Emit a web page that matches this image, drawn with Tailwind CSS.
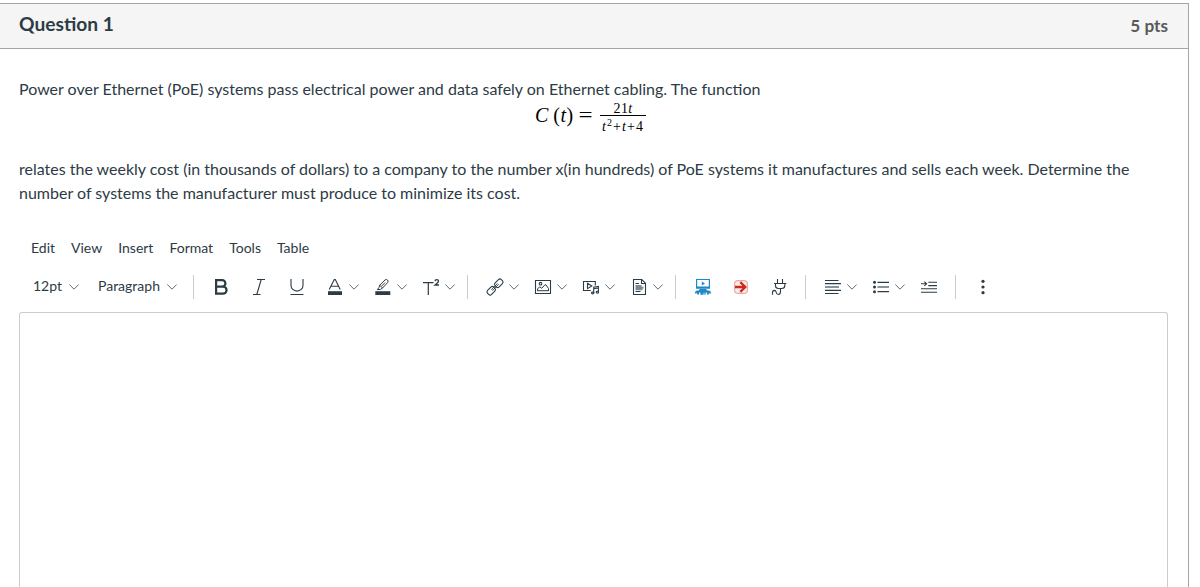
<!DOCTYPE html>
<html lang="en">
<head>
  <meta charset="UTF-8" />
  <title>Question 1</title>
  <meta name="viewport" content="width=device-width, initial-scale=1" />
  <!-- Tailwind CSS -->
  <script src="https://cdn.jsdelivr.net/npm/@tailwindcss/browser@4"></script>
</head>
<body class="bg-white h-screen overflow-hidden pt-[3px] font-['Lato','Noto_Sans',sans-serif] text-[#2d3b45]">
  <!-- Shared chevron -->
  <svg class="hidden">
    <symbol id="chevron" viewBox="0 0 10 6">
      <path d="M.3.5 5 5.2 9.7.5" fill="none" stroke="#5f6a73" stroke-width="1" />
    </symbol>
  </svg>

  <div class="w-[1189px] h-full border-t border-r border-[#a5a5a5] flex flex-col">
    <!-- Question Header -->
    <div class="h-[45px] shrink-0 bg-[#f5f5f5] border-b border-[#a5a5a5] pl-[19px] pr-5 flex items-center justify-between">
      <h2 class="text-[19.2px] leading-7 font-bold pb-[5px]">Question 1</h2>
      <span class="text-[17.2px] leading-6 font-bold text-[#595959] pb-px">5 pts</span>
    </div>

    <!-- Question Text -->
    <div class="px-[19px] pt-7 text-base leading-6 shrink-0">
      <p>Power over Ethernet (PoE) systems pass electrical power and data safely on Ethernet cabling. The function</p>
      <div class="h-14 flex justify-center font-['Liberation_Serif',serif] text-black pr-[7px]">
        <div class="h-[27px] flex items-center">
          <span class="text-[20px] leading-none whitespace-nowrap"><i>C</i><span class="ml-[5px] tracking-[0.5px]">(<i>t</i>)</span><span class="ml-1.5 inline-block scale-x-125">=</span></span>
          <span class="ml-[9px] w-[46px] flex flex-col items-center text-[14px] leading-none pt-1">
            <span class="h-[13px] tracking-[0.3px]">21<i>t</i></span>
            <span class="w-full h-px bg-black"></span>
            <span class="h-[15px] pt-1 whitespace-nowrap tracking-[1.1px]"><i>t</i><sup class="text-[10px] leading-none">2</sup>+<i>t</i>+4</span>
          </span>
        </div>
      </div>
      <p>relates the weekly cost (in thousands of dollars) to a company to the number x(in hundreds) of PoE systems it manufactures and sells each week. Determine the number of systems the manufacturer must produce to minimize its cost.</p>
    </div>

    <!-- Menu Bar -->
    <div class="mt-[31px] ml-[31px] h-6 shrink-0 flex items-center gap-4 text-sm">
      <span>Edit</span>
      <span>View</span>
      <span>Insert</span>
      <span>Format</span>
      <span>Tools</span>
      <span>Table</span>
    </div>

    <!-- Toolbar -->
    <div class="mt-[15px] ml-[33px] h-6 shrink-0 flex items-center text-sm">
      <div class="w-[65px] flex items-center">
        <span class="w-9 pb-0.5">12pt</span>
        <svg class="w-2.5 h-1.5"><use href="#chevron" /></svg>
      </div>
      <div class="w-[95px] flex items-center">
        <span class="w-[69px] pb-0.5">Paragraph</span>
        <svg class="w-2.5 h-1.5"><use href="#chevron" /></svg>
      </div>

      <div class="h-6 border-l border-[#c7cdd1] pl-2 pr-[7px] flex items-center">
        <button class="w-[38px] flex justify-center">
          <svg class="w-5 h-5" viewBox="0 0 20 20" fill="none" stroke="#2d3b45" stroke-width="2.2"><path d="M5.1 3v14M4 3.2h7.2a3.2 3.2 0 0 1 0 6.4H5.1M4 16.7h8a3.5 3.5 0 0 0 0-7.1h-1" /></svg>
        </button>
        <button class="w-[38px] flex justify-center">
          <svg class="w-5 h-5" viewBox="0 0 20 20" fill="none" stroke="#2d3b45" stroke-width="1.1"><path d="M8 2.5h8M4 17.5h7.5M12.2 2.5 7.8 17.5" /></svg>
        </button>
        <button class="w-[38px] flex justify-center">
          <svg class="w-5 h-5" viewBox="0 0 20 20" fill="none" stroke="#2d3b45" stroke-width="1.1"><path d="M4 2v6.5a6 5.6 0 0 0 12 0V2M3.5 17.5h13" /></svg>
        </button>
        <button class="w-12 flex items-center pl-[9px] gap-1">
          <svg class="w-5 h-5 shrink-0" viewBox="0 0 20 20" fill="none" stroke="#2d3b45" stroke-width="1.1"><path d="M4.2 12.5 9.3 2.6h1L15.2 12.5M6 9.3h7.6" /><path d="M3 14.2h14V18H3z" fill="#2d3b45" stroke="none" /></svg>
          <svg class="w-2.5 h-1.5 shrink-0"><use href="#chevron" /></svg>
        </button>
        <button class="w-12 flex items-center pl-[9px] gap-1">
          <svg class="w-5 h-5 shrink-0" viewBox="0 0 20 20" fill="none" stroke="#2d3b45" stroke-width="1"><path d="M6.6 8.2 12.2 2.8q1.2-.8 2.3.2t.3 2.3L9.6 11M6.6 8.2l-.5 2.2-1.8 2.2 3.2-.2L9.6 11M6.6 8.2 9.6 11M8.7 9 12 5.6" /><path d="M2.3 14.2h15V18h-15z" fill="#2d3b45" stroke="none" /></svg>
          <svg class="w-2.5 h-1.5 shrink-0"><use href="#chevron" /></svg>
        </button>
        <button class="w-12 flex items-center pl-[9px] gap-1">
          <svg class="w-5 h-5 shrink-0" viewBox="0 0 20 20" fill="none" stroke="#2d3b45" stroke-width="1.2"><path d="M2 5.6h10.5M7.3 5.6V18" /><path d="M14 4.2q.1-1.5 1.8-1.5 1.7 0 1.7 1.4 0 .9-1.2 1.8L14 8h4" stroke-width="1.3" /></svg>
          <svg class="w-2.5 h-1.5 shrink-0"><use href="#chevron" /></svg>
        </button>
      </div>

      <div class="h-6 border-l border-[#c7cdd1] pl-2 pr-[7px] flex items-center">
        <button class="w-12 flex items-center pl-[9px] gap-1">
          <svg class="w-5 h-5 shrink-0" viewBox="0 0 20 20" fill="none" stroke="#2d3b45" stroke-width="1.1"><g transform="rotate(-45 10 10)"><rect x=".3" y="7.2" width="8.7" height="5.6" rx="2" /><rect x="11" y="7.2" width="8.7" height="5.6" rx="2" /><path d="M6 9.3h8v1.4H6z" stroke-width=".8" /></g></svg>
          <svg class="w-2.5 h-1.5 shrink-0"><use href="#chevron" /></svg>
        </button>
        <button class="w-12 flex items-center pl-[9px] gap-1">
          <svg class="w-5 h-5 shrink-0" viewBox="0 0 20 20" fill="none" stroke="#2d3b45" stroke-width="1.1"><path d="M2.5 3.5h15v13h-15z" /><circle cx="7.5" cy="6.7" r="1.3" /><path d="M4.500 13.500V12l2.200-2.200 2 1.500 3.200-3.500h1l2.600 3.700v2M4 13.700h12" stroke-width="1" /></svg>
          <svg class="w-2.5 h-1.5 shrink-0"><use href="#chevron" /></svg>
        </button>
        <button class="w-12 flex items-center pl-[9px] gap-1">
          <svg class="w-5 h-5 shrink-0" viewBox="0 0 20 20" fill="none" stroke="#2d3b45" stroke-width="1.1"><path d="M9.8 13.500H2.500v-9h11.800v4M6.500 6.300v5.300L10.800 9z" /><path d="M12.700 16V10.300l4.700-.8V15M12.700 11.800l4.700-.8" /><ellipse cx="11.7" cy="16" rx="1.2" ry=".9" /><ellipse cx="16.4" cy="15.2" rx="1.2" ry=".9" /></svg>
          <svg class="w-2.5 h-1.5 shrink-0"><use href="#chevron" /></svg>
        </button>
        <button class="w-12 flex items-center pl-[9px] gap-1">
          <svg class="w-5 h-5 shrink-0" viewBox="0 0 20 20" fill="none" stroke="#2d3b45" stroke-width="1.1"><path d="M4.500 2.500h8.300l3.700 3.700v11.300h-12zM12.500 2.500v4h4" /><path d="M6.500 6.500h3.500M6.500 14.500h5" /><path d="M6.500 8.800h6M6.500 10.600h8M6.500 12.400h7" stroke="#7d878e" stroke-width="1.8" /></svg>
          <svg class="w-2.5 h-1.5 shrink-0"><use href="#chevron" /></svg>
        </button>
      </div>

      <div class="h-6 border-l border-[#c7cdd1] pl-2 pr-[7px] flex items-center">
        <button class="w-[38px] flex justify-center">
          <svg class="w-5 h-5" viewBox="0 0 20 20" fill="#1e88c9"><path d="M3 2h14v9.800H3zM4.200 3v6.500h11.600V3z" fill-rule="evenodd" /><path d="M8.800 4.500 12 6.500 8.800 8.500z" /><path d="M6.800 12h6.400l1 1.500h2q1.800.6 2 3h-1.700l-.5-1-.2 2h-1.600l-.7-2.200-.9.200v2.200h-1.200v-2h-.8v2H7.400v-2.200l-.9-.2-.7 2.200H4.200l-.2-2-.5 1H1.800q.2-2.400 2-3h2z" /></svg>
        </button>
        <button class="w-[38px] flex justify-center">
          <svg class="w-5 h-5" viewBox="0 0 20 20" fill="none"><rect x="3.600" y="3.600" width="12.800" height="12.800" rx="3.500" fill="#fbeceb" stroke="#eba9a3" stroke-width="1.2" /><path d="M4 10h10.200M9.300 5.200l5 4.800-5 4.800" stroke="#c62d1f" stroke-width="2.3" /></svg>
        </button>
        <button class="w-[38px] flex justify-center">
          <svg class="w-5 h-5" viewBox="0 0 20 20" fill="none" stroke="#2d3b45" stroke-width="1.1"><path d="M8.500 2v4.500M13.500 2v4.500M5 6.500h12.300M6.500 6.500v2.300q0 2.700 3 2.700h3.300q3 0 3-2.700V6.500M11.500 11.500v3q0 3-2.200 3-1.800 0-2.100-2.200-.3-1.900-1.900-1.900-1.800.1-1.800 2.300v2.100" /></svg>
        </button>
      </div>

      <div class="h-6 border-l border-[#c7cdd1] pl-2 pr-[7px] flex items-center">
        <button class="w-12 flex items-center pl-[9px] gap-1">
          <svg class="w-5 h-5 shrink-0" viewBox="0 0 20 20" fill="none" stroke="#2d3b45" stroke-width="1.2"><path d="M2 3.500h13.500M2 6.700h16M2 13.300h16M2 16.500h13.500" /><path d="M2 10h14" stroke="#8b949b" stroke-width="2" /></svg>
          <svg class="w-2.5 h-1.5 shrink-0"><use href="#chevron" /></svg>
        </button>
        <button class="w-12 flex items-center pl-[9px] gap-1">
          <svg class="w-5 h-5 shrink-0" viewBox="0 0 20 20" fill="none" stroke="#2d3b45" stroke-width="1.2"><path d="M6.500 5.300H18M6.500 14.700H18" /><path d="M6.500 10H18" stroke="#8b949b" stroke-width="2" /><g fill="#2d3b45" stroke="none"><circle cx="3.500" cy="5.300" r="1.500" /><circle cx="3.500" cy="10" r="1.500" /><circle cx="3.500" cy="14.700" r="1.500" /></g></svg>
          <svg class="w-2.5 h-1.5 shrink-0"><use href="#chevron" /></svg>
        </button>
        <button class="w-[38px] flex justify-center">
          <svg class="w-5 h-5" viewBox="0 0 20 20" fill="none" stroke="#2d3b45" stroke-width="1.1"><path d="M9.300 5.300H18M9.300 8.600H18M2 11.800h16M2 15.200h16M2 6.800h5.500M5.300 4.700l2.300 2.100-2.300 2.100" /></svg>
        </button>
      </div>

      <div class="h-6 border-l border-[#c7cdd1] pl-2 flex items-center">
        <button class="w-[38px] flex justify-center">
          <svg class="w-5 h-5" viewBox="0 0 20 20" fill="#2d3b45"><circle cx="10" cy="4.300" r="1.600" /><circle cx="10" cy="10" r="1.600" /><circle cx="10" cy="15.700" r="1.600" /></svg>
        </button>
      </div>
    </div>

    <!-- Editor Area -->
    <div class="mt-[13px] ml-[19px] mr-5 grow border border-b-0 border-[#c7cdd1] rounded-t-[3px]"></div>
  </div>
</body>
</html>
